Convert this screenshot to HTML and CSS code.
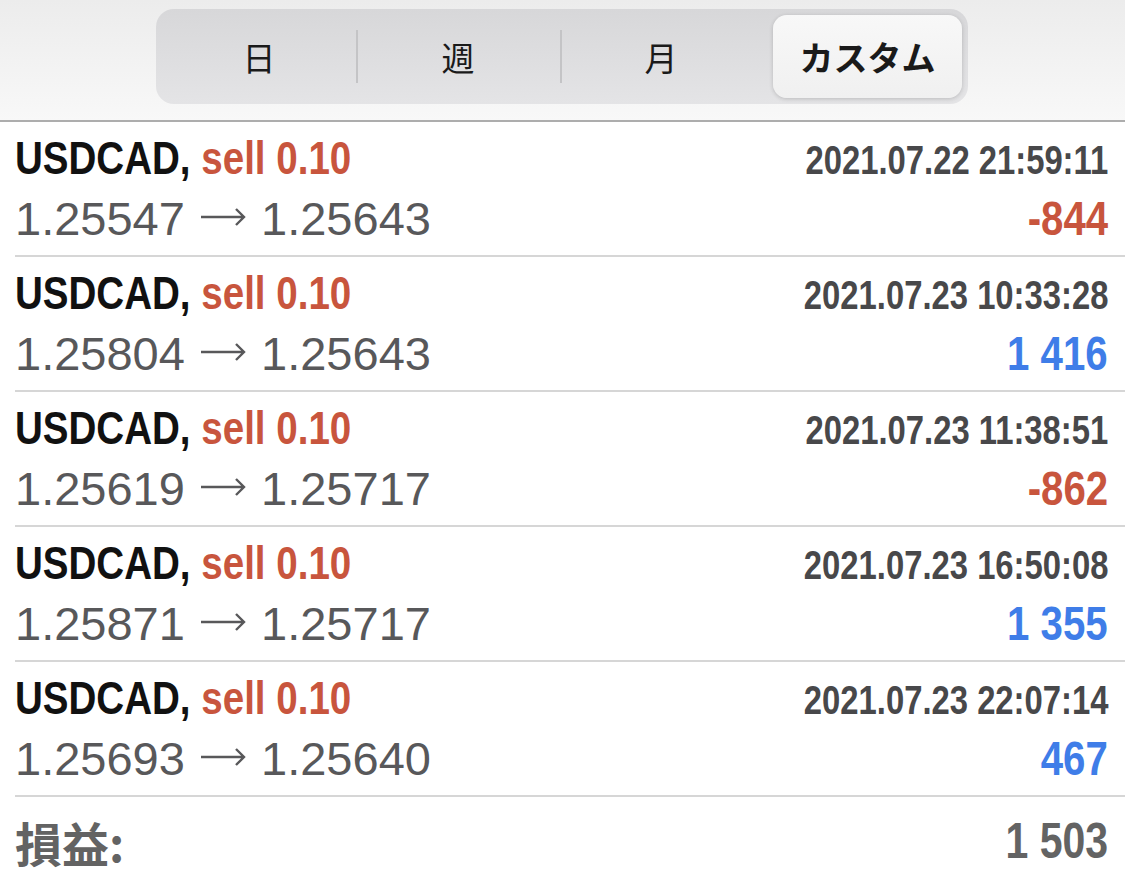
FILE: index.html
```html
<!doctype html>
<html>
<head>
<meta charset="utf-8">
<link rel="stylesheet" href="styles.css">
<title>履歴</title>
</head>
<body>
<div class="top_bar">
  <div class="seg">
    <a class="seg_item">日</a>
    <a class="seg_item">週</a>
    <a class="seg_item">月</a>
    <a class="seg_item seg_on">カスタム</a>
  </div>
</div>

<ul class="deals">
  <li class="deal">
    <div class="line">
      <span class="sym">USDCAD, <em class="sell">sell 0.10</em></span>
      <span class="time">2021.07.22 21:59:11</span>
    </div>
    <div class="line">
      <span class="price">1.25547 <svg class="arr" viewBox="0 0 46 20"><path d="M1 10H44M36 2l8 8-8 8"/></svg> 1.25643</span>
      <span class="profit loss">-844</span>
    </div>
  </li>
  <li class="deal">
    <div class="line">
      <span class="sym">USDCAD, <em class="sell">sell 0.10</em></span>
      <span class="time">2021.07.23 10:33:28</span>
    </div>
    <div class="line">
      <span class="price">1.25804 <svg class="arr" viewBox="0 0 46 20"><path d="M1 10H44M36 2l8 8-8 8"/></svg> 1.25643</span>
      <span class="profit gain">1 416</span>
    </div>
  </li>
  <li class="deal">
    <div class="line">
      <span class="sym">USDCAD, <em class="sell">sell 0.10</em></span>
      <span class="time">2021.07.23 11:38:51</span>
    </div>
    <div class="line">
      <span class="price">1.25619 <svg class="arr" viewBox="0 0 46 20"><path d="M1 10H44M36 2l8 8-8 8"/></svg> 1.25717</span>
      <span class="profit loss">-862</span>
    </div>
  </li>
  <li class="deal">
    <div class="line">
      <span class="sym">USDCAD, <em class="sell">sell 0.10</em></span>
      <span class="time">2021.07.23 16:50:08</span>
    </div>
    <div class="line">
      <span class="price">1.25871 <svg class="arr" viewBox="0 0 46 20"><path d="M1 10H44M36 2l8 8-8 8"/></svg> 1.25717</span>
      <span class="profit gain">1 355</span>
    </div>
  </li>
  <li class="deal">
    <div class="line">
      <span class="sym">USDCAD, <em class="sell">sell 0.10</em></span>
      <span class="time">2021.07.23 22:07:14</span>
    </div>
    <div class="line">
      <span class="price">1.25693 <svg class="arr" viewBox="0 0 46 20"><path d="M1 10H44M36 2l8 8-8 8"/></svg> 1.25640</span>
      <span class="profit gain">467</span>
    </div>
  </li>
</ul>

<div class="total">
  <span class="total_label">損益:</span>
  <span class="total_num">1 503</span>
</div>
</body>
</html>
```

FILE: styles.css
```css
body{ margin:0; background-color:#fff; font-family:"Liberation Sans","Noto Sans CJK JP",sans-serif; overflow:hidden;}
ul{ margin:0; padding:0; list-style:none;}
em{ font-style:normal;}

.top_bar{
	height:122px;
	background:linear-gradient(#ececec,#f8f8f8);
	border-bottom:2px solid #adadad;
	padding-top:9px;
	box-sizing:border-box;
}
.seg{
	margin-left:156px;
	width:812px;
	height:95px;
	box-sizing:border-box;
	padding:6px;
	border-radius:18px;
	background:linear-gradient(#d7d7d9,#e4e4e6);
	display:grid;
	grid-template-columns:194px 204px 202px 1fr;
}
.seg_item{
	display:flex;
	align-items:center;
	justify-content:center;
	font-family:"Noto Sans CJK JP",sans-serif;
	font-size:33px;
	color:#1a1a1a;
	position:relative;
}
.seg_item + .seg_item:before{
	content:"";
	position:absolute;
	left:0;
	top:15px;
	bottom:15px;
	border-left:2px solid #c4c4c6;
}
.seg_on{
	margin-left:11px;
	background:linear-gradient(#f8f8f8,#f0f0f0);
	border-radius:14px;
	box-shadow:0 1px 4px rgba(0,0,0,0.18);
	font-weight:bold;
	font-size:34px;
}
.seg_on:before{ display:none;}

/* narrow bold, like the app's condensed face */
.sym,.time,.profit,.total_num{
	display:inline-block;
	font-weight:bold;
	transform:scaleX(0.82);
}
.sym{ transform-origin:left center;}
.time,.profit,.total_num{ transform-origin:right center;}

.deal{
	margin-left:15px;
	padding:6px 17px 0 0;
	height:135px;
	box-sizing:border-box;
	border-bottom:2px solid #d6d6d6;
}
.line{
	display:flex;
	justify-content:space-between;
	align-items:baseline;
	height:60px;
	line-height:60px;
}
.sym{
	font-size:47px;
	color:#111;
}
.sell{ color:#c8553d;}
.time{
	font-size:40px;
	color:#48484a;
}
.price{
	font-size:47px;
	color:#58585a;
}
.arr{
	width:46px;
	height:20px;
	margin:0 2px;
	vertical-align:8px;
	fill:none;
	stroke:#58585a;
	stroke-width:2.4;
}
.profit{
	font-size:49px;
}
.loss{ color:#c8553d;}
.gain{ color:#3f7de8;}

.total{
	display:flex;
	justify-content:space-between;
	align-items:center;
	padding:8px 17px 0 15px;
	height:80px;
	box-sizing:border-box;
	color:#636363;
	font-weight:bold;
}
.total_label{
	font-family:"Noto Sans CJK JP",sans-serif;
	font-size:47px;
}
.total_num{
	font-size:50px;
}
```
